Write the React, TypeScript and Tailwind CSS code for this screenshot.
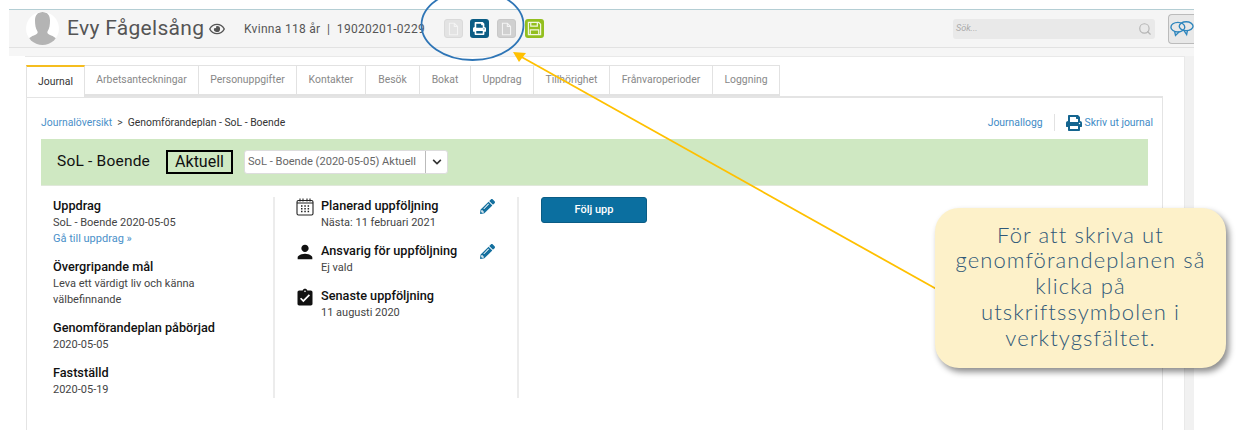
import { FaPencilAlt, FaPrint, FaRegEye, FaChevronDown } from "react-icons/fa";
import { MdPerson, MdAssignmentTurnedIn } from "react-icons/md";
import { Search } from "lucide-react";

const tabs = [
  { label: "Journal", w: "w-[59px]" },
  { label: "Arbetsanteckningar", w: "w-[114px]" },
  { label: "Personuppgifter", w: "w-[98px]" },
  { label: "Kontakter", w: "w-[69px]" },
  { label: "Besök", w: "w-[54px]" },
  { label: "Bokat", w: "w-[51px]" },
  { label: "Uppdrag", w: "w-[63px]" },
  { label: "Tillhörighet", w: "w-[76px]" },
  { label: "Frånvaroperioder", w: "w-[103px]" },
  { label: "Loggning", w: "w-[67px]" },
];

const Avatar = () => (
  <div className="w-[33px] h-[33px] rounded-full bg-white overflow-hidden shrink-0">
    <svg viewBox="0 0 33 33" className="w-full h-full">
      <path
        d="M16.500 0c-5 0-7.500 3.500-7.500 8.500 0 4 .5 8 2.500 11 .6 1-.2 2.500-2 3.300C5 24.500 1.500 26 1 33h31c-.5-7-4-8.500-8.500-10.200-1.800-.8-2.600-2.300-2-3.300 2-3 2.500-7 2.500-11C24 3.500 21.500 0 16.500 0z"
        fill="#b4b4b4"
      />
    </svg>
  </div>
);

const DocIcon = () => (
  <svg viewBox="0 0 16 16" className="w-[13px] h-[14px]" fill="none" stroke="#f4f4f4" strokeWidth="1.300">
    <path d="M3 1h6l4 4v10H3z" />
    <path d="M9 1v4h4" />
  </svg>
);

const SaveIcon = () => (
  <svg viewBox="0 0 16 16" className="w-[15px] h-[15px]" fill="none" stroke="#f2f7e2" strokeWidth="1.300">
    <path d="M1.500 1.500h11l2 2v11h-13z" />
    <path d="M4 1.500v4h7v-4M3.500 14.500v-5h9v5" />
  </svg>
);

const ChatIcon = () => (
  <svg viewBox="0 0 26 18" className="w-[25px] h-[18px]" fill="none" stroke="#2f86bd" strokeWidth="1.500">
    <ellipse cx="8.500" cy="7" rx="7.500" ry="5.200" />
    <path d="M5 11.500l1 4.500 4-3.900" />
    <ellipse cx="17.500" cy="6" rx="7.500" ry="4.800" />
    <path d="M15 10.500l3 4.500 1-4.700" />
  </svg>
);

const CalendarIcon = () => (
  <svg viewBox="0 0 18 18" className="w-[18px] h-[18px]" fill="none" stroke="#222" strokeWidth="1.100">
    <rect x="1" y="2.500" width="16" height="14.500" rx="1.500" />
    <path d="M4 .5v3M7 .5v3M11 .5v3M14 .5v3M1 5h16" />
    <path
      d="M5 8h1.500M8.300 8h1.500M11.600 8h1.500M5 10.700h1.500M8.300 10.700h1.500M11.600 10.700h1.500M5 13.400h1.500M8.300 13.400h1.500M11.600 13.400h1.500"
      strokeWidth="1.500"
    />
  </svg>
);

const Info = ({ title, children }: { title: string; children: React.ReactNode }) => (
  <div className="mb-[11px]">
    <p className="text-[12.700px] leading-[17px] font-medium text-[#111]">{title}</p>
    <div className="text-[11px] leading-[16px] text-[#444] mt-[1px]">{children}</div>
  </div>
);

const FollowUp = ({
  icon,
  title,
  sub,
  edit,
}: {
  icon: React.ReactNode;
  title: string;
  sub: string;
  edit?: boolean;
}) => (
  <div className="flex h-[45px]">
    <div className="w-[25px] shrink-0 pt-[1px]">{icon}</div>
    <div className="w-[159px]">
      <p className="text-[12.700px] leading-[17px] font-medium text-[#111]">{title}</p>
      <p className="text-[11px] leading-[16px] text-[#444] mt-[1px]">{sub}</p>
    </div>
    {edit && <FaPencilAlt className="w-[15px] h-[15px] text-[#14709f] mt-[2px]" />}
  </div>
);

const App = () => {
  return (
    <div className="relative w-[1236px] h-[430px] overflow-hidden bg-white pt-[9px] pl-[9px] font-['Roboto',sans-serif]">
      <div className="w-[1185px] h-[421px] border-t border-[#b4ced4] bg-[#f1f1f1] flex flex-col">
        {/* HEADER */}
        <div className="h-[38px] shrink-0 flex items-center bg-[#f5f5f5] border-b border-[#e2e2e2] pl-[17px]">
          <Avatar />
          <span className="ml-[8px] w-[134px] text-[21px] tracking-[0.3px] text-[#555] whitespace-nowrap">
            Evy Fågelsång
          </span>
          <FaRegEye className="ml-[7px] w-[18px] h-[14px] text-[#555] shrink-0" />
          <span className="ml-[18px] w-[184px] text-[12px] tracking-[0.3px] text-[#555] whitespace-pre">
            Kvinna 118 år{"  |  "}19020201-0229
          </span>
          <div className="ml-[16px] w-[19px] h-[19px] rounded-[3px] bg-[#e3e3e3] border border-[#dadada] flex items-center justify-center">
            <DocIcon />
          </div>
          <div className="ml-[7px] w-[19px] h-[19px] rounded-[3px] bg-[#0b5c84] flex items-center justify-center">
            <FaPrint className="w-[13px] h-[13px] text-white" />
          </div>
          <div className="ml-[8px] w-[19px] h-[19px] rounded-[3px] bg-[#d0d0d0] border border-[#c8c8c8] flex items-center justify-center">
            <DocIcon />
          </div>
          <div className="ml-[9px] w-[19px] h-[19px] rounded-[3px] bg-[#93bf1f] flex items-center justify-center">
            <SaveIcon />
          </div>
          <div className="ml-[409px] w-[202px] h-[20px] rounded-[3px] bg-[#e9e9e9] flex items-center justify-between pl-[3px] pr-[3px]">
            <span className="text-[9px] italic text-[#aaa]">Sök...</span>
            <Search className="w-[14px] h-[14px] text-[#b5b5b5]" />
          </div>
          <div className="ml-[13px] w-[26px] h-[30px] rounded-l-[4px] border border-r-0 border-[#bbb] bg-[#e8e8e8] flex items-center justify-start overflow-hidden pl-[1px]">
            <ChatIcon />
          </div>
        </div>

        {/* PAGE */}
        <div className="h-[8px] shrink-0 bg-[#f6f6f6]" />
        <div className="flex-1 flex min-h-0 bg-white">
          <div className="w-[16px] shrink-0 bg-white" />
          <div className="w-[1159px] bg-white border-t border-[#e9e9e9] pl-[1px] pt-[8px] flex flex-col">
            {/* TABS */}
            <div className="flex h-[31px] shrink-0">
              {tabs.map((t, i) => (
                <div
                  key={t.label}
                  className={`${t.w} flex items-center justify-center text-[10.400px] border-r border-t border-[#e2e2e2] ${
                    i === 0
                      ? "border-l border-t-2 border-t-[#f5bd1f] text-[#333] h-[32px] bg-white relative z-10"
                      : "text-[#888] border-b-2 border-b-[#e2e2e2]"
                  }`}
                >
                  {t.label}
                </div>
              ))}
            </div>

            {/* JOURNAL PANEL */}
            <div className="w-[1137px] flex-1 min-h-0 border-l border-r border-t-2 border-[#e4e4e4] px-[14px]">
              <div className="w-[1112px] flex items-center justify-between h-[41px] pt-[8px]">
                <p className="text-[10.400px]">
                  <span className="text-[#4a90c9]">Journalöversikt</span>
                  <span className="text-[#444] mx-[5px]">&gt;</span>
                  <span className="text-[#333]">Genomförandeplan - SoL - Boende</span>
                </p>
                <div className="flex items-center text-[10.400px] text-[#3f8bc6]">
                  <span>Journallogg</span>
                  <div className="w-[1px] h-[17px] bg-[#e2e2e2] mx-[11px]" />
                  <FaPrint className="w-[16px] h-[16px] text-[#14648f] mr-[3px]" />
                  <span>Skriv ut journal</span>
                </div>
              </div>

              {/* GREEN BANNER */}
              <div className="w-[1107px] h-[47px] bg-[#cfe8c2] flex items-center pl-[16px] border-b border-[#e0e8da]">
                <span className="text-[15.500px] text-[#111] tracking-[0.2px]">SoL - Boende</span>
                <span className="ml-[16px] w-[67px] h-[24px] flex items-center justify-center border-2 border-black text-[16px] text-[#111]">
                  Aktuell
                </span>
                <div className="ml-[11px] w-[204px] h-[24px] bg-white rounded-[3px] border border-[#ddd] flex items-center">
                  <span className="w-[180px] pl-[3px] text-[11.100px] text-[#666] whitespace-nowrap">
                    SoL - Boende (2020-05-05) Aktuell
                  </span>
                  <div className="flex-1 h-full border-l border-[#bbb] flex items-center justify-center">
                    <FaChevronDown className="w-[10px] h-[10px] text-[#333]" />
                  </div>
                </div>
              </div>

              {/* COLUMNS */}
              <div className="flex pt-[11px]">
                <div className="w-[222px] h-[201px] ml-[12px] border-r-2 border-[#ececec]">
                  <Info title="Uppdrag">
                    <p>SoL - Boende 2020-05-05</p>
                    <p className="text-[#4a90c9]">Gå till uppdrag »</p>
                  </Info>
                  <Info title="Övergripande mål">
                    <p>Leva ett värdigt liv och känna</p>
                    <p>välbefinnande</p>
                  </Info>
                  <Info title="Genomförandeplan påbörjad">
                    <p>2020-05-05</p>
                  </Info>
                  <Info title="Fastställd">
                    <p>2020-05-19</p>
                  </Info>
                </div>
                <div className="w-[244px] h-[201px] border-r-2 border-[#ececec] pl-[21px]">
                  <FollowUp icon={<CalendarIcon />} title="Planerad uppföljning" sub="Nästa: 11 februari 2021" edit />
                  <FollowUp
                    icon={<MdPerson className="w-[22px] h-[22px] -ml-[2px] -mt-[2px] text-[#111]" />}
                    title="Ansvarig för uppföljning"
                    sub="Ej vald"
                    edit
                  />
                  <FollowUp
                    icon={<MdAssignmentTurnedIn className="w-[20px] h-[20px] -ml-[1px] text-[#111]" />}
                    title="Senaste uppföljning"
                    sub="11 augusti 2020"
                  />
                </div>
                <div className="pl-[22px] -mt-[1px]">
                  <button className="w-[106px] h-[26px] rounded-[3px] bg-[#0b6fa0] border border-[#0a5c85] text-[11px] font-medium text-white">
                    Följ upp
                  </button>
                </div>
              </div>
            </div>
          </div>
          <div className="w-[10px] shrink-0 bg-[#f1f1f1] border-l border-[#e9e9e9]" />
        </div>
      </div>

      {/* ANNOTATION */}
      <svg className="absolute inset-0 pointer-events-none" width="1236" height="430" viewBox="0 0 1236 430" fill="none">
        <ellipse cx="472.500" cy="25" rx="51" ry="35" stroke="#2e75b6" strokeWidth="1.800" />
        <path d="M940 291L518 55" stroke="#ffc000" strokeWidth="1.800" />
        <path d="M513 52l13 1-7 9z" fill="#ffc000" />
      </svg>
      <div className="absolute left-[935px] top-[208px] w-[291px] h-[160px] rounded-[24px] bg-[#fdf1c9] shadow-[3px_4px_6px_rgba(0,0,0,0.45)] flex items-center justify-center text-center pb-[4px] font-['Lato',sans-serif] font-light text-[22px] leading-[25.700px] tracking-[1.100px] text-[#2f5878] whitespace-nowrap">
        <p>
          För att skriva ut
          <br />
          genomförandeplanen så
          <br />
          klicka på
          <br />
          utskriftssymbolen i
          <br />
          verktygsfältet.
        </p>
      </div>
    </div>
  );
};

export default App;
